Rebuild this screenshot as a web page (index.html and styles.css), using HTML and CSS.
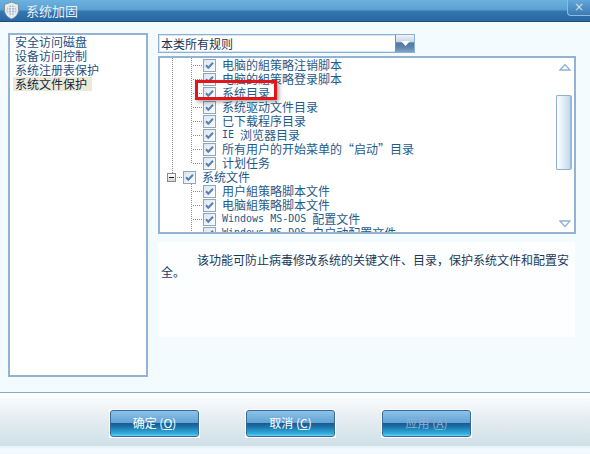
FILE: index.html
```html
<!DOCTYPE html>
<html lang="zh-CN">
<head>
    <meta charset="UTF-8">
    <title>系统加固</title>
    <link rel="stylesheet" href="styles.css">
</head>
<body>
    <!-- shared checkbox drawing -->
    <svg class="defs" width="0" height="0">
        <defs>
            <linearGradient id="cbFill" x1="0" y1="0" x2="1" y2="1">
                <stop offset="0" stop-color="#dce4ec"/>
                <stop offset="1" stop-color="#ffffff"/>
            </linearGradient>
            <symbol id="chk" viewBox="0 0 13 13">
                <rect x="0.5" y="0.5" width="12" height="12" fill="url(#cbFill)" stroke="#8ea6bf"/>
                <path d="M3 6.2 L5.3 8.7 L10 3.8" fill="none" stroke="#5382b4" stroke-width="2"/>
            </symbol>
        </defs>
    </svg>

    <div class="window">
        <div class="titlebar">
            <svg class="app-icon" width="17" height="19" viewBox="0 0 17 19">
                <path d="M8.5 1 L15.5 3.4 V9 C15.5 13.4 12.3 16.4 8.5 18 C4.7 16.4 1.5 13.4 1.5 9 V3.4 Z" fill="#e4ebf1" stroke="#7b8fa3"/>
                <circle cx="8.5" cy="9.2" r="4.8" fill="#a7b9c9"/>
                <path d="M3.7 9.2 H13.3 M8.5 4.4 V14 M4.6 6.6 H12.4 M4.6 11.8 H12.4 M6 5 C5 8 5 11 6 13.5 M11 5 C12 8 12 11 11 13.5" fill="none" stroke="#f2f6f9" stroke-width="0.8"/>
            </svg>
            <span class="title">系统加固</span>
            <span class="close">×</span>
        </div>

        <div class="main">
            <ul class="category-list">
                <li><span>安全访问磁盘</span></li>
                <li><span>设备访问控制</span></li>
                <li><span>系统注册表保护</span></li>
                <li class="selected"><span>系统文件保护</span></li>
            </ul>

            <div class="right">
                <div class="select">
                    <span class="select-text">本类所有规则</span>
                    <span class="select-btn">
                        <svg width="9" height="5" viewBox="0 0 9 5"><path d="M0 0 H9 L4.5 5 Z" fill="#ffffff"/></svg>
                    </span>
                </div>

                <div class="tree-box">
                    <div class="tree">
                        <div class="group-a">
                            <div class="row lvl3"><svg class="cb"><use href="#chk"/></svg>电脑的組策略注销脚本</div>
                            <div class="row lvl3"><svg class="cb"><use href="#chk"/></svg>电脑的組策略登录脚本</div>
                            <div class="row lvl3"><svg class="cb"><use href="#chk"/></svg>系统目录</div>
                            <div class="row lvl3"><svg class="cb"><use href="#chk"/></svg>系统驱动文件目录</div>
                            <div class="row lvl3"><svg class="cb"><use href="#chk"/></svg>已下载程序目录</div>
                            <div class="row lvl3"><svg class="cb"><use href="#chk"/></svg><span class="en">IE&nbsp;</span>浏览器目录</div>
                            <div class="row lvl3"><svg class="cb"><use href="#chk"/></svg>所有用户的开始菜单的“启动”目录</div>
                            <div class="row lvl3 last"><svg class="cb"><use href="#chk"/></svg>计划任务</div>
                        </div>
                        <div class="row lvl2"><span class="expander"></span><svg class="cb"><use href="#chk"/></svg>系统文件</div>
                        <div class="group-b">
                            <div class="row lvl3"><svg class="cb"><use href="#chk"/></svg>用户組策略脚本文件</div>
                            <div class="row lvl3"><svg class="cb"><use href="#chk"/></svg>电脑組策略脚本文件</div>
                            <div class="row lvl3"><svg class="cb"><use href="#chk"/></svg><span class="en">Windows MS-DOS&nbsp;</span>配置文件</div>
                            <div class="row lvl3"><svg class="cb"><use href="#chk"/></svg><span class="en">Windows MS-DOS&nbsp;</span>自启动配置文件</div>
                        </div>
                    </div>

                    <div class="scrollbar">
                        <div class="sb-arrow">
                            <svg width="12" height="8" viewBox="0 0 12 8"><path d="M1 7 L6 1.5 L11 7 Z" fill="none" stroke="#8fb2d4" stroke-width="1.3"/></svg>
                        </div>
                        <div class="sb-track"><div class="sb-thumb"></div></div>
                        <div class="sb-arrow">
                            <svg width="12" height="8" viewBox="0 0 12 8"><path d="M1 1 L6 6.5 L11 1 Z" fill="none" stroke="#8fb2d4" stroke-width="1.3"/></svg>
                        </div>
                    </div>

                    <!-- red highlight drawn over the tree -->
                    <div class="mark"></div>
                </div>

                <div class="desc">该功能可防止病毒修改系统的关键文件、目录，保护系统文件和配置安全。</div>
            </div>
        </div>

        <div class="footer">
            <button class="btn"><span>确定 (<u>O</u>)</span></button>
            <button class="btn"><span>取消 (<u>C</u>)</span></button>
            <button class="btn disabled"><span>应用 (<u>A</u>)</span></button>
        </div>
    </div>
</body>
</html>
```

FILE: styles.css
```css
/* Page and window frame */
body {
    margin: 0;
    background-color: #f4fbfe;
    font-family: "Noto Sans CJK SC", sans-serif;
    font-size: 12px;
}

.defs {
    position: absolute;
}

.window {
    width: 590px;
    height: 454px;
    display: flex;
    flex-direction: column;
    overflow: hidden;
}

/* Title bar */
.titlebar {
    height: 21px;
    border-bottom: 1px solid #1d4f80;
    background: linear-gradient(#6cb2de, #5aa2d4 45%, #3476ae 55%, #2967a3);
    display: flex;
    align-items: center;
}

.app-icon {
    margin: 0 6px 0 3px;
}

.title {
    color: #e6eef6;
    font-size: 13px;
    line-height: 21px;
}

.close {
    margin-left: auto;
    align-self: flex-start;
    width: 22px;
    height: 15px;
    border: 1px solid #8bbde2;
    border-top: none;
    border-right: none;
    border-radius: 0 0 0 4px;
    background: linear-gradient(#64a6d8, #3a7bb4);
    color: #d4e0ea;
    text-align: center;
    line-height: 14px;
    font-family: "DejaVu Sans", sans-serif;
    font-size: 12px;
    overflow: hidden;
}

/* Main area */
.main {
    height: 370px;
    box-sizing: border-box;
    padding: 11px 0 0 8px;
    display: flex;
    gap: 10px;
}

.category-list {
    list-style: none;
    margin: 0;
    padding: 0 0 0 3px;
    width: 140px;
    height: 344px;
    box-sizing: border-box;
    border: 2px solid #94b3d3;
    background-color: #ffffff;
}

.category-list li {
    height: 14px;
    line-height: 14px;
    color: #1f5180;
}

.category-list li span {
    display: inline-block;
    padding: 0 5px 0 2px;
}

.category-list li.selected span {
    background-color: #ece9d8;
    color: #10283e;
}

.right {
    width: 418px;
    display: flex;
    flex-direction: column;
}

/* Dropdown */
.select {
    margin-top: 1px;
    width: 257px;
    height: 19px;
    box-sizing: border-box;
    border: 1px solid #8fb1d1;
    box-shadow: inset 0 0 0 1px #d6e6f3;
    background-color: #ffffff;
    display: flex;
}

.select-text {
    flex: 1;
    padding-left: 2px;
    line-height: 17px;
    color: #1a3554;
}

.select-btn {
    width: 18px;
    border-left: 1px solid #6f93b8;
    background: linear-gradient(#eef3f8, #c6d6e6 40%, #53799f 46%, #5a83ad 70%, #7fa3c6);
    display: flex;
    align-items: center;
    justify-content: center;
}

/* Tree */
.tree-box {
    margin-top: 3px;
    height: 178px;
    box-sizing: border-box;
    border: 2px solid #94b3d3;
    background-color: #ffffff;
    display: flex;
    position: relative;
}

.tree {
    flex: 1;
    overflow: hidden;
}

.row {
    height: 14px;
    line-height: 14px;
    display: flex;
    align-items: center;
    white-space: nowrap;
    color: #1f5a8a;
}

.cb {
    width: 13px;
    height: 13px;
    flex: none;
    margin-right: 6px;
}

.en {
    font-family: "DejaVu Sans Mono", monospace;
    font-size: 10px;
    white-space: pre;
}

.group-a {
    background: repeating-linear-gradient(to bottom, #8c8c8c 0 1px, transparent 1px 2px) 12px 0 / 1px 100% no-repeat;
}

.lvl3 {
    padding-left: 43px;
    background:
        repeating-linear-gradient(to bottom, #8c8c8c 0 1px, transparent 1px 2px) 31px 0 / 1px 100% no-repeat,
        repeating-linear-gradient(to right, #8c8c8c 0 1px, transparent 1px 2px) 33px 7px / 10px 1px no-repeat;
}

.lvl3.last {
    background:
        repeating-linear-gradient(to bottom, #8c8c8c 0 1px, transparent 1px 2px) 31px 0 / 1px 8px no-repeat,
        repeating-linear-gradient(to right, #8c8c8c 0 1px, transparent 1px 2px) 33px 7px / 10px 1px no-repeat;
}

.lvl2 {
    padding-left: 7px;
    background:
        repeating-linear-gradient(to bottom, #8c8c8c 0 1px, transparent 1px 2px) 12px 0 / 1px 3px no-repeat,
        repeating-linear-gradient(to right, #8c8c8c 0 1px, transparent 1px 2px) 17px 7px / 6px 1px no-repeat;
}

.expander {
    width: 9px;
    height: 9px;
    box-sizing: border-box;
    margin-right: 7px;
    border: 1px solid #8a8a8a;
    background:
        linear-gradient(#1e1e1e, #1e1e1e) center / 5px 1px no-repeat,
        linear-gradient(#ffffff, #d6d6cc);
}

/* Scrollbar */
.scrollbar {
    width: 18px;
    display: flex;
    flex-direction: column;
}

.sb-arrow {
    height: 17px;
    display: flex;
    align-items: center;
    justify-content: center;
}

.sb-track {
    flex: 1;
    padding-top: 20px;
}

.sb-thumb {
    width: 16px;
    height: 75px;
    box-sizing: border-box;
    border: 1px solid #8fb2d4;
    border-right: 2px solid #97b7d8;
    border-radius: 2px;
    background: linear-gradient(to right, #ffffff, #e6f0f8 40%, #c3d8ec);
}

.mark {
    position: absolute;
    left: 35px;
    top: 22px;
    width: 82px;
    height: 20px;
    box-sizing: border-box;
    border: 3px solid #e2151b;
    box-shadow: 2px 2px 4px rgba(0, 0, 0, 0.35);
}

/* Description */
.desc {
    margin-top: 8px;
    width: 417px;
    height: 95px;
    box-sizing: border-box;
    padding: 12px 3px 0;
    background-color: #fdfeff;
    text-indent: 36px;
    line-height: 12px;
    color: #1b3a58;
}

/* Footer buttons */
.footer {
    flex: 1;
    border-top: 1px solid #7ea9d2;
    background: linear-gradient(#ffffff, #e9eff3 35%, #cfe0e8 86%, #e4f0f6 87%, #f4fbfe 93%);
    display: flex;
    justify-content: center;
    gap: 45px;
    padding: 16px 9px 0 0;
}

.btn {
    width: 91px;
    height: 29px;
    padding: 1px;
    border: none;
    background-color: #ffffff;
    font-family: inherit;
    font-size: 12px;
    cursor: pointer;
}

.btn span {
    display: block;
    height: 100%;
    box-sizing: border-box;
    border: 1px solid #366a98;
    border-radius: 3px;
    background: linear-gradient(#8cc2e6, #64a4d6 46%, #1d5a8f 50%, #1a6fa6 62%, #2fb4e2 92%, #7ecdee);
    color: #ffffff;
    line-height: 23px;
    text-align: center;
}

.btn.disabled span {
    color: #8eb0d2;
}
```
